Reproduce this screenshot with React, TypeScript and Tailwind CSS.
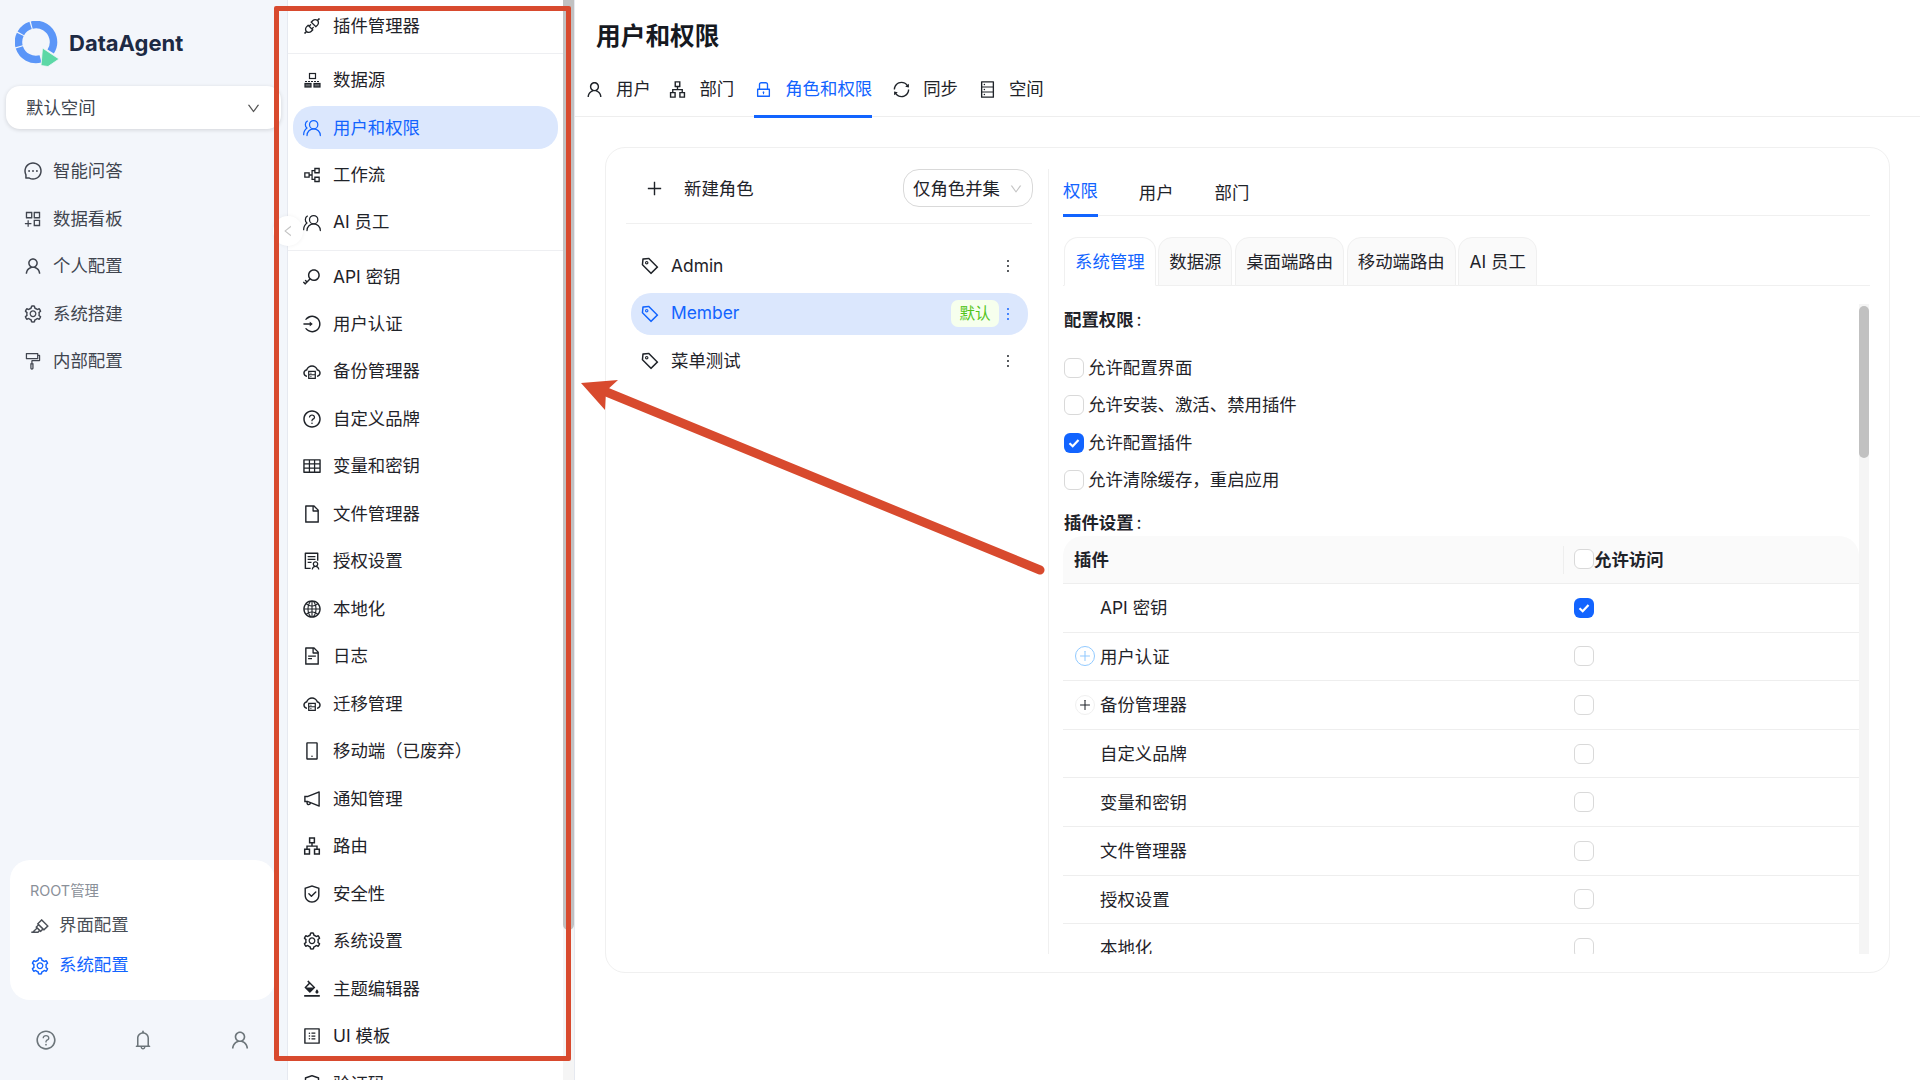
import type { ReactNode } from 'react';
import {
  AiOutlineApi,
  AiOutlineApartment,
  AiOutlineAppstoreAdd,
  AiOutlineBell,
  AiOutlineBgColors,
  AiOutlineCloudServer,
  AiOutlineDatabase,
  AiOutlineDown,
  AiOutlineFile,
  AiOutlineFileText,
  AiOutlineFormatPainter,
  AiOutlineGlobal,
  AiOutlineHighlight,
  AiOutlineKey,
  AiOutlineLeft,
  AiOutlineLock,
  AiOutlineLogin,
  AiOutlineMessage,
  AiOutlineMobile,
  AiOutlineMore,
  AiOutlineNotification,
  AiOutlinePartition,
  AiOutlinePlus,
  AiOutlineProfile,
  AiOutlineQuestionCircle,
  AiOutlineSafety,
  AiOutlineSafetyCertificate,
  AiOutlineSetting,
  AiOutlineSolution,
  AiOutlineSync,
  AiOutlineTable,
  AiOutlineTag,
  AiOutlineUser,
} from 'react-icons/ai';
import { UsersRound } from 'lucide-react';

function PeopleIcon() {
  return <UsersRound size={20} strokeWidth={1.5} className="-scale-x-100" />;
}

// three-block data source glyph, not in the icon sets
function SourceIcon() {
  return (
    <svg width="17" height="17" viewBox="0 0 17 17" fill="none" stroke="currentColor" strokeWidth="1.2">
      <rect x="5.5" y="1.5" width="6" height="5" />
      <path d="M1 9.5h15" strokeDasharray="2 1" />
      <rect x="1" y="11.5" width="6" height="3.5" fill="currentColor" fillOpacity="0.7" />
      <rect x="10" y="11.5" width="6" height="3.5" fill="currentColor" fillOpacity="0.7" />
    </svg>
  );
}

function Logo() {
  const arcs = [
    { len: 137, from: 256 },
    { len: 42, from: 210 },
    { len: 40, from: 166 },
    { len: 87, from: 75 },
  ];
  return (
    <svg width="46" height="46" viewBox="0 0 46 46" fill="none">
      {arcs.map((a) => (
        <circle
          key={a.from}
          cx="21"
          cy="21"
          r="17.5"
          pathLength={360}
          stroke="#5b96f8"
          strokeWidth="7.5"
          strokeDasharray={`${a.len} 360`}
          transform={`rotate(${a.from} 21 21)`}
        />
      ))}
      <path d="M27.5 27 44 38 33 45.5 26 44.5 Z" fill="#5cd8a6" stroke="#f3f6fb" strokeWidth="0.8" />
    </svg>
  );
}

const navItems: { label: string; icon: ReactNode; active?: boolean; divider?: boolean }[] = [
  { label: '插件管理器', icon: <AiOutlineApi size={20} />, divider: true },
  { label: '数据源', icon: <SourceIcon /> },
  { label: '用户和权限', icon: <PeopleIcon />, active: true },
  { label: '工作流', icon: <AiOutlinePartition size={20} /> },
  { label: 'AI 员工', icon: <PeopleIcon />, divider: true },
  { label: 'API 密钥', icon: <AiOutlineKey size={20} /> },
  { label: '用户认证', icon: <AiOutlineLogin size={20} /> },
  { label: '备份管理器', icon: <AiOutlineCloudServer size={20} /> },
  { label: '自定义品牌', icon: <AiOutlineQuestionCircle size={20} /> },
  { label: '变量和密钥', icon: <AiOutlineTable size={20} /> },
  { label: '文件管理器', icon: <AiOutlineFile size={20} /> },
  { label: '授权设置', icon: <AiOutlineSolution size={20} /> },
  { label: '本地化', icon: <AiOutlineGlobal size={20} /> },
  { label: '日志', icon: <AiOutlineFileText size={20} /> },
  { label: '迁移管理', icon: <AiOutlineCloudServer size={20} /> },
  { label: '移动端（已废弃）', icon: <AiOutlineMobile size={20} /> },
  { label: '通知管理', icon: <AiOutlineNotification size={20} /> },
  { label: '路由', icon: <AiOutlineApartment size={20} /> },
  { label: '安全性', icon: <AiOutlineSafety size={20} /> },
  { label: '系统设置', icon: <AiOutlineSetting size={20} /> },
  { label: '主题编辑器', icon: <AiOutlineBgColors size={20} /> },
  { label: 'UI 模板', icon: <AiOutlineProfile size={20} /> },
  { label: '验证码', icon: <AiOutlineSafetyCertificate size={20} /> },
];

const sideItems = [
  { label: '智能问答', icon: <AiOutlineMessage size={20} /> },
  { label: '数据看板', icon: <AiOutlineAppstoreAdd size={20} /> },
  { label: '个人配置', icon: <AiOutlineUser size={20} /> },
  { label: '系统搭建', icon: <AiOutlineSetting size={20} /> },
  { label: '内部配置', icon: <AiOutlineFormatPainter size={20} /> },
];

const topTabs = [
  { label: '用户', icon: <AiOutlineUser size={19} /> },
  { label: '部门', icon: <AiOutlineApartment size={19} /> },
  { label: '角色和权限', icon: <AiOutlineLock size={19} />, active: true },
  { label: '同步', icon: <AiOutlineSync size={19} /> },
  { label: '空间', icon: <AiOutlineDatabase size={19} /> },
];

const subTabs = ['系统管理', '数据源', '桌面端路由', '移动端路由', 'AI 员工'];

const configPerms = [
  { label: '允许配置界面' },
  { label: '允许安装、激活、禁用插件' },
  { label: '允许配置插件', checked: true },
  { label: '允许清除缓存，重启应用' },
];

const pluginRows: { label: string; checked?: boolean; expand?: 'hover' | 'plain' }[] = [
  { label: 'API 密钥', checked: true },
  { label: '用户认证', expand: 'hover' },
  { label: '备份管理器', expand: 'plain' },
  { label: '自定义品牌' },
  { label: '变量和密钥' },
  { label: '文件管理器' },
  { label: '授权设置' },
  { label: '本地化' },
];

function Checkbox({ checked }: { checked?: boolean }) {
  if (checked) {
    return (
      <span className="flex h-5 w-5 shrink-0 items-center justify-center rounded-[6px] bg-[#1264ff]">
        <svg width="14" height="14" viewBox="0 0 14 14" fill="none" stroke="#fff" strokeWidth="2.2">
          <path d="M2.5 7.2 5.7 10.2 11.5 4" />
        </svg>
      </span>
    );
  }
  return <span className="block h-5 w-5 shrink-0 rounded-[6px] border border-[#d9d9d9] bg-white" />;
}

function RoleItem({ label, active, badge }: { label: string; active?: boolean; badge?: boolean }) {
  return (
    <div
      className={`ml-[5px] flex h-[42px] w-[397px] items-center rounded-[20px] pl-[9px] pr-[11px] ${
        active ? 'bg-[#dbe7fd] text-[#1264ff]' : 'text-[#1f2329]'
      }`}
    >
      <AiOutlineTag size={20} className="-scale-x-100" />
      <span className="ml-[11px] flex-1">{label}</span>
      {badge && (
        <span className="flex h-[27px] w-[48px] items-center justify-center rounded-[7px] bg-[#f6ffed] text-[15.5px] text-[#52c41a]">
          默认
        </span>
      )}
      <AiOutlineMore size={18} />
    </div>
  );
}

export default function App() {
  return (
    <div className="relative flex h-screen w-full overflow-hidden bg-white font-['Inter','Noto_Sans_CJK_SC',sans-serif] text-[17.4px] text-[#1f2329]">
      {/* Left app sidebar */}
      <aside className="flex h-full w-[287px] shrink-0 flex-col bg-[#f3f6fb] text-[#40454f]">
        <div className="flex h-[86px] items-center pl-[15px] pt-[1px]">
          <Logo />
          <span className="ml-[8px] text-[22px] font-bold text-[#1d2a44]">DataAgent</span>
        </div>
        <div className="ml-[6px] flex h-[43px] w-[275px] items-center justify-between rounded-[14px] bg-white pl-5 pr-[20px] pt-[2px] shadow-[0_1px_4px_rgba(0,0,0,0.14)]">
          <span>默认空间</span>
          <AiOutlineDown size={15} className="text-[#555]" />
        </div>
        <div className="mt-[18.5px] flex flex-col">
          {sideItems.map((item) => (
            <div key={item.label} className="flex h-[47.5px] items-center gap-[10px] pl-[23px]">
              {item.icon}
              <span>{item.label}</span>
            </div>
          ))}
        </div>
        <div className="ml-[10px] mt-auto flex h-[140px] w-[265px] flex-col rounded-[20px] bg-white pl-[20px] pt-[21px]">
          <div className="text-[14.4px] leading-5 text-[#8a9099]">ROOT管理</div>
          <div className="mt-[4.5px] flex h-[40px] items-center gap-[9px] text-[#4a4f57]">
            <AiOutlineHighlight size={20} />
            <span>界面配置</span>
          </div>
          <div className="flex h-[40px] items-center gap-[9px] text-[#1264ff]">
            <AiOutlineSetting size={20} />
            <span>系统配置</span>
          </div>
        </div>
        <div className="flex h-[80px] items-center gap-[75px] pl-[35px] text-[#6c757a]">
          <AiOutlineQuestionCircle size={22} />
          <AiOutlineBell size={22} />
          <AiOutlineUser size={22} />
        </div>
      </aside>

      {/* Settings nav */}
      <nav className="flex h-full w-[288px] shrink-0 border-x border-[#e6e9f0] bg-white">
        <div className="flex-1 overflow-hidden pt-[4.5px]">
          {navItems.map((item) => (
            <div key={item.label}>
              <div
                className={`mx-[5px] flex h-[43px] items-center gap-[11px] rounded-[20px] pl-[9px] ${
                  item.active ? 'bg-[#dbe7fd] text-[#1264ff]' : ''
                }`}
              >
                <span className="flex w-5 justify-center">{item.icon}</span>
                <span>{item.label}</span>
              </div>
              {item.divider ? (
                <div className="mb-[4.6px] mt-[5.5px] h-px bg-[#eeeff2]" />
              ) : (
                <div className="h-[4.47px]" />
              )}
            </div>
          ))}
        </div>
        <div className="w-[11px] bg-[#f5f5f5]">
          <div className="h-[930px] rounded-b-[6px] bg-[#c1c1c1]" />
        </div>
      </nav>

      {/* Main area */}
      <main className="min-w-0 flex-1">
        <h1 className="flex h-[62px] items-center pl-[21px] pt-[12px] text-[24.7px] font-bold text-[#16191f]">
          用户和权限
        </h1>
        <div className="flex h-[55px] gap-[20px] border-b border-[#eeeeee] pl-[10px]">
          {topTabs.map((tab, i) => (
            <div
              key={tab.label}
              className={`flex h-[56px] items-center gap-[12px] border-b-[3px] pt-[1px] ${
                tab.active ? 'border-[#1264ff] text-[#1264ff]' : 'border-transparent'
              } ${i === 0 ? 'mr-[-2.4px]' : ''}`}
            >
              {tab.icon}
              <span>{tab.label}</span>
            </div>
          ))}
        </div>

        <div className="pl-[30px] pt-[30px]">
          <div className="flex h-[826px] w-[1285px] rounded-[20px] border border-[#f0f0f0] pl-[20px] pt-[21px]">
            {/* Role list */}
            <div className="w-[406px] shrink-0">
              <div className="flex items-center justify-between border-b border-[#f0f0f0] pb-[16px]">
                <div className="flex items-center gap-[20px] pl-[19px] pt-[2px]">
                  <AiOutlinePlus size={19} />
                  <span>新建角色</span>
                </div>
                <div className="mr-[-1px] flex h-[38px] w-[130px] items-center justify-between rounded-[16px] border border-[#d9d9d9] pl-[9px] pr-[9px] pt-[2px]">
                  <span>仅角色并集</span>
                  <AiOutlineDown size={14} className="text-[#c4c4c4]" />
                </div>
              </div>
              <div className="flex flex-col gap-[5.5px] pt-[21px]">
                <RoleItem label="Admin" />
                <RoleItem label="Member" active badge />
                <RoleItem label="菜单测试" />
              </div>
            </div>

            <div className="ml-[16px] h-[785px] w-px shrink-0 bg-[#f0f0f0]" />

            {/* Permission panel */}
            <div className="ml-[14px] flex h-[785px] w-[807px] flex-col">
              <div className="flex h-[47px] shrink-0 gap-[41px] border-b border-[#f0f0f0]">
                <div className="flex h-[48px] items-center border-b-[3px] border-[#1264ff] text-[#1264ff]">权限</div>
                <div className="flex h-[48px] items-center">用户</div>
                <div className="flex h-[48px] items-center">部门</div>
              </div>
              <div className="mt-[21px] flex h-[49px] shrink-0 gap-[2.7px] border-b border-[#f0f0f0] pl-px">
                {subTabs.map((tab, i) => (
                  <div
                    key={tab}
                    className={`flex h-[49px] items-center rounded-t-[14px] border border-[#f0f0f0] px-[10px] pt-px ${
                      i === 0 ? 'border-b-white bg-white text-[#1264ff]' : 'bg-[#fafafa]'
                    }`}
                  >
                    {tab}
                  </div>
                ))}
              </div>

              <div className="mt-[18px] flex min-h-0 flex-1 overflow-hidden">
                <div className="w-[796px] shrink-0">
                  <div className="flex h-[33px] items-center pl-px font-semibold">
                    配置权限<span className="ml-[3px] font-normal">:</span>
                  </div>
                  <div className="mt-[12px] pl-px">
                    {configPerms.map((p) => (
                      <div key={p.label} className="flex h-[37.5px] items-center gap-[4px]">
                        <Checkbox checked={p.checked} />
                        <span>{p.label}</span>
                      </div>
                    ))}
                  </div>
                  <div className="mt-[11px] flex h-[26px] items-center pl-px font-semibold">
                    插件设置<span className="ml-[3px] font-normal">:</span>
                  </div>

                  <div className="flex h-[48px] items-center rounded-t-[20px] border-b border-[#eeeeee] bg-[#fafafa] font-semibold">
                    <div className="w-[500px] pl-[11px] pt-px">插件</div>
                    <div className="h-[28px] w-px bg-[#eeeeee]" />
                    <div className="ml-[10px] flex items-center">
                      <Checkbox />
                      <span className="pt-px">允许访问</span>
                    </div>
                  </div>
                  {pluginRows.map((row) => (
                    <div key={row.label} className="flex h-[48.6px] items-center border-b border-[#eeeeee]">
                      <div className="flex w-[501px] items-center pl-[12px]">
                        {row.expand ? (
                          <span
                            className={`flex h-5 w-5 items-center justify-center rounded-full border ${
                              row.expand === 'hover' ? 'border-[#91caff] text-[#91caff]' : 'border-[#f0f0f0]'
                            }`}
                          >
                            <AiOutlinePlus size={14} />
                          </span>
                        ) : (
                          <span className="w-5" />
                        )}
                        <span className="ml-[5px] pt-px">{row.label}</span>
                      </div>
                      <div className="ml-[10px]">
                        <Checkbox checked={row.checked} />
                      </div>
                    </div>
                  ))}
                </div>
                <div className="w-[10px] shrink-0 bg-[#f5f5f5] pt-[2px]">
                  <div className="h-[152px] rounded-[5px] bg-[#c1c1c1]" />
                </div>
              </div>
            </div>
          </div>
        </div>
      </main>

      {/* Sidebar collapse handle, the red callout lies over it */}
      <div className="absolute left-[273px] top-[216px] flex h-[30px] w-[30px] items-center justify-center rounded-full bg-white text-[#c4c4c4] shadow-[0_0_4px_rgba(0,0,0,0.06)]">
        <AiOutlineLeft size={14} />
      </div>

      {/* Red callout drawn over the screenshot */}
      <div className="pointer-events-none absolute left-[274px] top-[6px] h-[1055px] w-[297px] rounded-[2px] border-[5px] border-[#d84a2e]" />
      <svg className="pointer-events-none absolute left-0 top-0" width="1920" height="1080" fill="none">
        <path d="M1040 570 604 391" stroke="#d84a2e" strokeWidth="9" strokeLinecap="round" />
        <path d="M581 383 618 380 606 391 605 410Z" fill="#d84a2e" />
      </svg>
    </div>
  );
}
